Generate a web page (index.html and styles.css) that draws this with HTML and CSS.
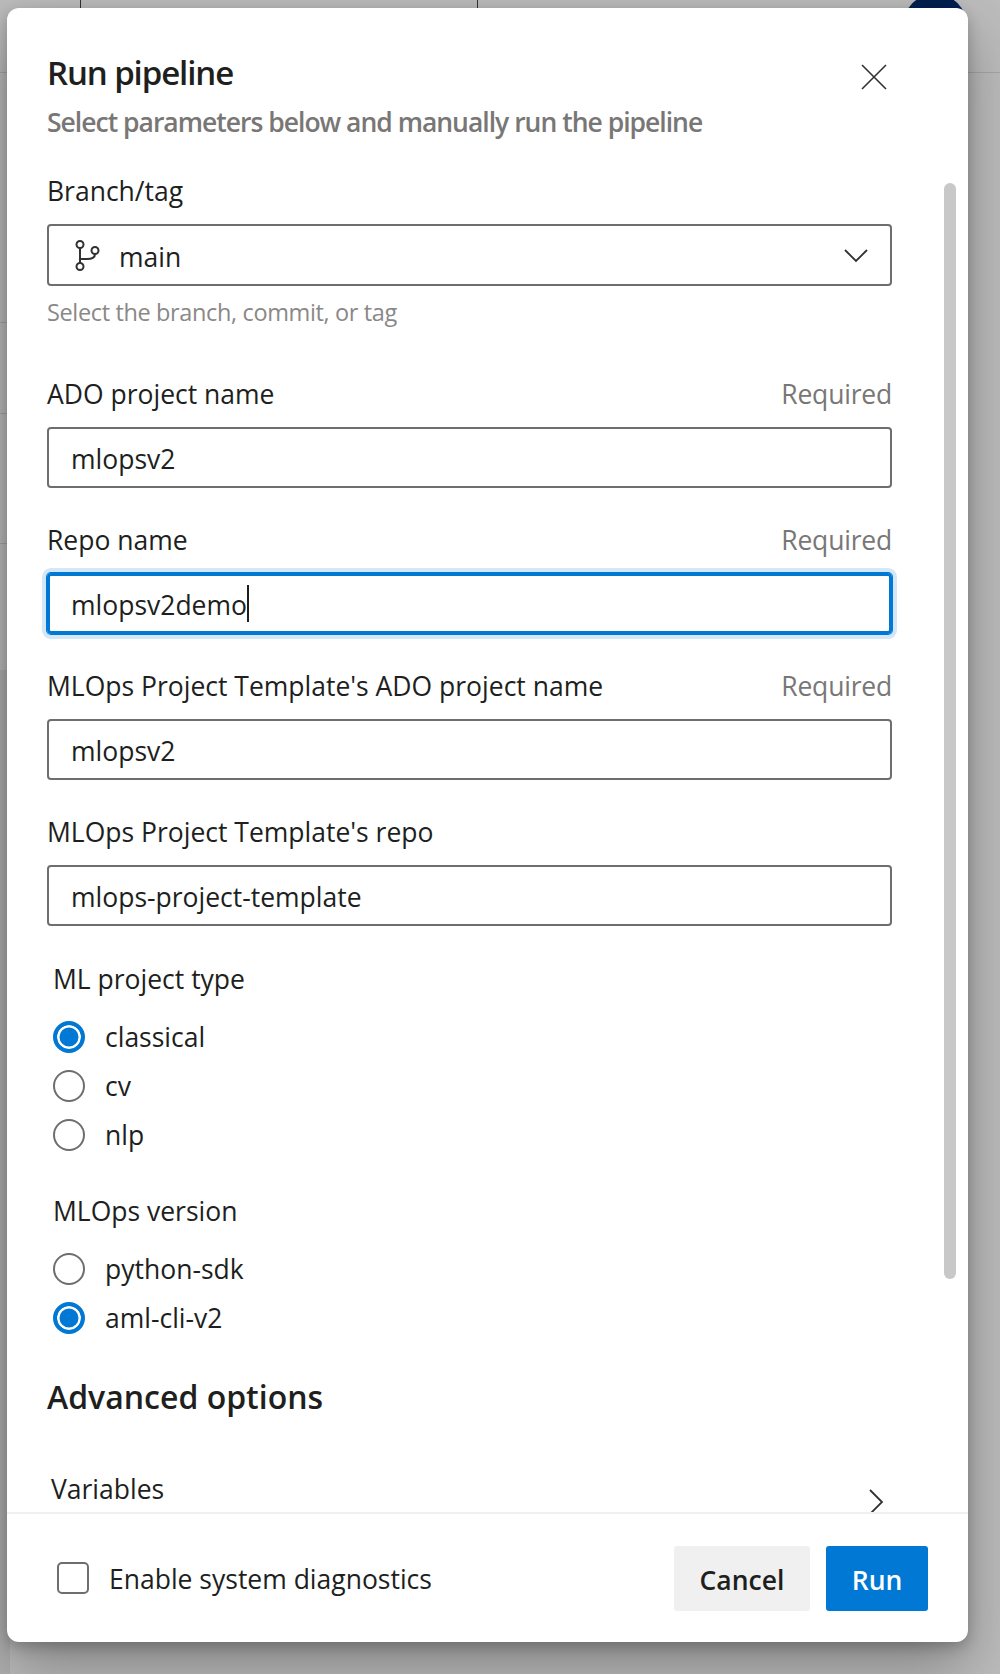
FILE: index.html
```html
<!DOCTYPE html>
<html>
<head>
  <meta charset="utf-8" />
  <title>Run pipeline</title>
  <link rel="stylesheet" href="styles.css">
</head>
<body>
  <div class="backdrop">
    <div class="bd-line bd-v1"></div>
    <div class="bd-line bd-v2"></div>
    <div class="bd-line bd-h1"></div>
    <div class="bd-line bd-h2"></div>
    <div class="bd-line bd-h3"></div>
    <div class="bd-line bd-h4"></div>
    <div class="bd-lower"></div>
    <div class="bd-avatar"></div>
  </div>

  <div class="dialog">
    <div class="header">
      <div class="header-text">
        <h1 class="title">Run pipeline</h1>
        <p class="subtitle">Select parameters below and manually run the pipeline</p>
      </div>
      <svg class="close" width="26" height="26" viewBox="0 0 26 26"><path d="M1 1L25 25M25 1L1 25" fill="none" stroke="#323130" stroke-width="1.6"/></svg>
    </div>

    <div class="scrollbar"></div>

    <div class="body">
      <div class="field branch">
        <label class="label">Branch/tag</label>
        <div class="input select">
          <svg class="branch-icon" width="26" height="31" viewBox="0 0 26 31">
            <g fill="none" stroke="#323130" stroke-width="2">
              <circle cx="6" cy="4.5" r="3.5"/>
              <circle cx="6" cy="26.5" r="3.5"/>
              <circle cx="21" cy="10.5" r="3.5"/>
              <path d="M6 8V23M6 19H13C17 19 21 18 21 14"/>
            </g>
          </svg>
          <span class="value">main</span>
          <svg class="chevron" width="24" height="14" viewBox="0 0 24 14"><path d="M1 1L12 12L23 1" fill="none" stroke="#323130" stroke-width="1.8"/></svg>
        </div>
        <div class="helper">Select the branch, commit, or tag</div>
      </div>

      <div class="field">
        <div class="label-row"><label class="label">ADO project name</label><span class="required">Required</span></div>
        <div class="input">mlopsv2</div>
      </div>

      <div class="field">
        <div class="label-row"><label class="label">Repo name</label><span class="required">Required</span></div>
        <div class="input focused">mlopsv2demo<span class="caret"></span></div>
      </div>

      <div class="field">
        <div class="label-row"><label class="label">MLOps Project Template's ADO project name</label><span class="required">Required</span></div>
        <div class="input">mlopsv2</div>
      </div>

      <div class="field">
        <div class="label-row"><label class="label">MLOps Project Template's repo</label></div>
        <div class="input">mlops-project-template</div>
      </div>

      <div class="radio-group first">
        <div class="group-label">ML project type</div>
        <div class="radio"><span class="dot checked"></span>classical</div>
        <div class="radio"><span class="dot"></span>cv</div>
        <div class="radio"><span class="dot"></span>nlp</div>
      </div>

      <div class="radio-group">
        <div class="group-label">MLOps version</div>
        <div class="radio"><span class="dot"></span>python-sdk</div>
        <div class="radio"><span class="dot checked"></span>aml-cli-v2</div>
      </div>

      <h2 class="section">Advanced options</h2>

      <div class="expander">
        <span>Variables</span>
        <svg class="expander-icon" width="16" height="26" viewBox="0 0 16 26"><path d="M2 1L14 13L2 25" fill="none" stroke="#323130" stroke-width="1.8"/></svg>
      </div>
    </div>

    <div class="footer">
      <div class="check"><span class="box"></span><span class="check-label">Enable system diagnostics</span></div>
      <button class="btn btn-cancel">Cancel</button>
      <button class="btn btn-run">Run</button>
    </div>
  </div>
</body>
</html>
```

FILE: styles.css
```css
* { box-sizing: border-box; }
html, body { margin: 0; height: 100%; }
body {
  background-color: #bcbcbc;
  font-family: "Open Sans", "Noto Sans", sans-serif;
  font-size: 26.5px;
  color: #201f1e;
  overflow: hidden;
  padding: 8px 32px 32px 7px;
}

/* page behind the dialog */
.backdrop { position: absolute; top: 0; left: 0; right: 0; bottom: 0; }
.bd-line { position: absolute; background-color: #a6a6a6; }
.bd-v1 { left: 80px; top: 0; width: 1px; height: 10px; background-color: #333; }
.bd-v2 { left: 477px; top: 0; width: 1px; height: 10px; background-color: #333; }
.bd-h1 { left: 0; right: 0; top: 72px; height: 1px; }
.bd-h2 { left: 0; width: 10px; top: 322px; height: 1px; }
.bd-h3 { left: 0; width: 10px; top: 413px; height: 1px; }
.bd-h4 { left: 0; width: 10px; top: 543px; height: 1px; }
.bd-lower { position: absolute; left: 0; width: 10px; top: 670px; bottom: 0; background-color: #b0b0b0; }
.bd-avatar { position: absolute; left: 903px; top: -6px; width: 64px; height: 64px; border-radius: 50%; background-color: #002050; }

.dialog {
  position: relative;
  height: 100%;
  background-color: #fff;
  border-radius: 12px;
  display: flex;
  flex-direction: column;
  box-shadow: 0 26px 58px rgba(0, 0, 0, 0.3), 0 5px 14px rgba(0, 0, 0, 0.22);
}

.header { display: flex; justify-content: space-between; padding: 44px 81px 0 40px; height: 165px; flex: none; }
.title { margin: 0; font-size: 33px; line-height: 42px; font-weight: 600; letter-spacing: -1.1px; }
.subtitle { margin: 10px 0 0; font-size: 26.5px; line-height: 36px; font-weight: 600; color: #797775; letter-spacing: -1px; }
.close { margin-top: 12px; }

.scrollbar { position: absolute; left: 937px; top: 175px; width: 12px; height: 1096px; border-radius: 6px; background-color: #c8c8c8; }

.body { flex: 1; overflow: hidden; padding: 0 76px 0 40px; }

.field { height: 146px; }
.field.branch { height: 203px; }
.label { line-height: 36px; display: block; }
.label-row { display: flex; justify-content: space-between; line-height: 36px; margin-bottom: 15px; }
.required { color: #797775; letter-spacing: -0.2px; }
.field.branch .label { margin-bottom: 15px; }

.input {
  height: 61px;
  border: 2px solid #6e6e6e;
  border-radius: 4px;
  padding: 3px 22px 0;
  display: flex;
  align-items: center;
  line-height: 36px;
}
.input.focused { border: 3px solid #0078d4; padding-left: 21px; box-shadow: 0 0 0 1px #0078d4, 0 0 0 5px #d4e7f8; }
.caret { width: 2px; height: 37px; margin-top: -3px; background-color: #201f1e; }
.select { height: 62px; padding-left: 25px; }
.branch-icon { margin: -3px 19px 0 0; }
.chevron { margin-top: -2px; }
.value { flex: 1; }
.helper { margin-top: 9px; font-size: 23.5px; line-height: 34px; color: #8a8886; letter-spacing: -0.36px; }

.radio-group { padding-left: 6px; margin-bottom: 34px; }
.radio-group.first { padding-top: 1px; }
.group-label { line-height: 36px; margin-bottom: 15px; }
.radio { display: flex; align-items: center; height: 49px; }
.dot { width: 32px; height: 32px; border: 2px solid #6e6e6e; border-radius: 50%; margin-right: 20px; flex: none; }
.dot.checked { border: 4px solid #0078d4; background-color: #0078d4; box-shadow: inset 0 0 0 2.5px #fff; }

.section { margin: 2px 0 53px; font-size: 32px; line-height: 42px; font-weight: 600; }
.expander { display: flex; justify-content: space-between; padding: 0 8px 0 4px; line-height: 36px; }
.expander-icon { margin-top: 18px; }

.footer {
  flex: none;
  height: 130px;
  border-top: 2px solid #f0f0f0;
  display: flex;
  align-items: center;
  padding: 0 40px 0 50px;
}
.check { flex: 1; display: flex; align-items: center; }
.check-label { padding-top: 2px; }
.box { width: 32px; height: 32px; border: 2px solid #6e6e6e; border-radius: 5px; margin-right: 20px; }
.btn { height: 65px; border: 0; border-radius: 3px; padding: 3px 0 0; font-family: inherit; font-size: 26.5px; font-weight: 600; }
.btn-cancel { width: 136px; margin-right: 16px; background-color: #f0f0f0; color: #201f1e; }
.btn-run { width: 102px; background-color: #0078d4; color: #fff; }
```
